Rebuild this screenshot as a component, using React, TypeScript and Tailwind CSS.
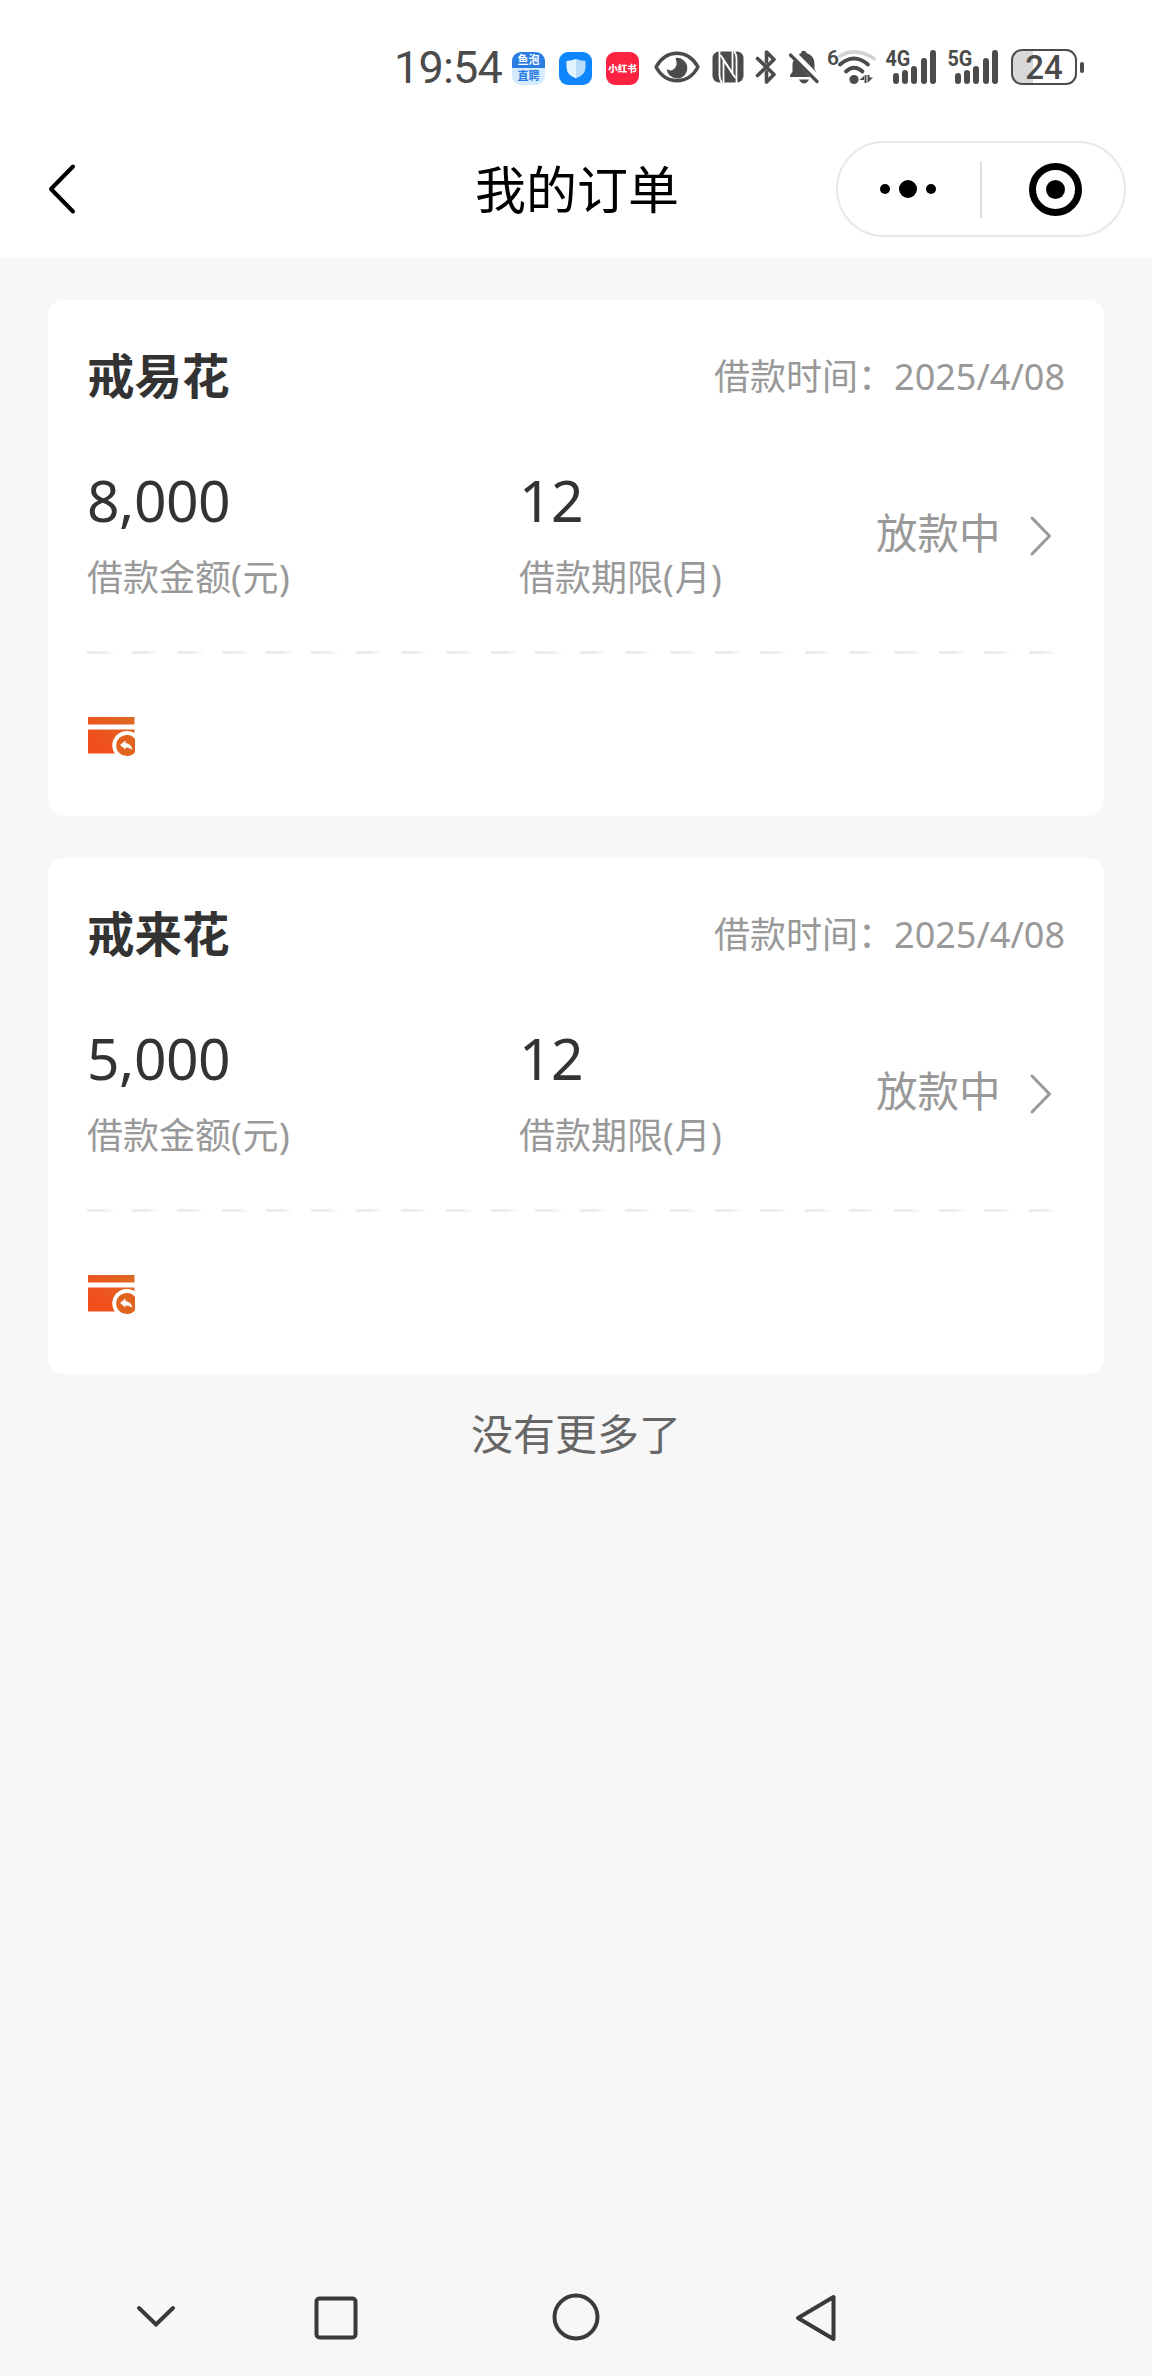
import React from "react";

interface Order {
    id: number;
    product: string;
    amount: string;
    term: number;
    date: string;
    status: string;
}

const orders: Order[] = [
    { id: 1, product: "戒易花", amount: "8,000", term: 12, date: "2025/4/08", status: "放款中" },
    { id: 2, product: "戒来花", amount: "5,000", term: 12, date: "2025/4/08", status: "放款中" },
];

function EyeIcon() {
    return (
        <svg viewBox="0 0 46 32" className="w-[46px] h-8" fill="none">
            <path d="M2 16C7 7 14 2.2 23 2.2S39 7 44 16C39 25 32 29.8 23 29.8S7 25 2 16Z" stroke="#4b4b4b" strokeWidth="3.4" strokeLinejoin="round" />
            <path d="M21.5 7A10.3 10.3 0 1 1 12.800 18Q16 20.500 19.500 18.500Q24.500 15 21.500 7Z" fill="#4b4b4b" />
        </svg>
    );
}

function NfcIcon() {
    return (
        <svg viewBox="0 0 32 32" className="w-8 h-8">
            <rect x="0.500" y="0.500" width="31" height="31" rx="6.500" fill="#4b4b4b" />
            <path d="M7.500 0V24Q7.500 29 10 32" fill="none" stroke="#fff" strokeWidth="1.800" />
            <path d="M24.500 32V8Q24.500 3 22 0" fill="none" stroke="#fff" strokeWidth="1.800" />
            <path d="M11.500 32V9L23.500 27" fill="none" stroke="#fff" strokeWidth="1.800" />
            <path d="M8.500 4L20.500 22.500V0" fill="none" stroke="#fff" strokeWidth="1.800" />
        </svg>
    );
}

function BluetoothIcon() {
    return (
        <svg viewBox="0 0 22 34" className="w-[22px] h-[34px]" fill="none" stroke="#4b4b4b" strokeWidth="3.6" strokeLinejoin="round" strokeLinecap="round">
            <path d="M2.500 8.500L19 24.500L11.500 32V22M11.500 12V2L19 9.500L2.500 25.500" />
        </svg>
    );
}

function BellOffIcon() {
    return (
        <svg viewBox="0 0 32 34" className="w-8 h-[34px]">
            <path d="M15.500 0.800Q18 0.800 18.500 3Q26.500 5.500 26.500 14V19L28.500 22.500L10.800 4.500Q12 3.500 13 3Q13.300 0.800 15.500 0.800Z" fill="#4b4b4b" />
            <path d="M6 10L22 27H2Q1.500 25 4.500 22V14Q4.500 12 6 10Z" fill="#4b4b4b" />
            <path d="M11 29.500H21Q19 33.500 16 33.500T11 29.500Z" fill="#4b4b4b" />
            <path d="M2.500 5L29 31.500" stroke="#4b4b4b" strokeWidth="3.200" strokeLinecap="round" />
        </svg>
    );
}

function WifiIcon() {
    return (
        <svg viewBox="0 0 40 36" className="w-10 h-9" fill="none" strokeLinecap="round">
            <path d="M3 7Q19 -2.500 37 9.500" stroke="#d2d2d2" strokeWidth="3.600" />
            <path d="M3 15.500Q17 3.500 31 15.500" stroke="#4b4b4b" strokeWidth="3.800" />
            <path d="M9 22.500Q17 15 25.500 22.500" stroke="#4b4b4b" strokeWidth="3.800" />
            <circle cx="17" cy="30.500" r="4.600" fill="#4b4b4b" />
            <path d="M27.500 26V34H29.500V26ZM22.500 31L28 26V31ZM30.500 26V34L36 28.500H32.500V26Z" fill="#4b4b4b" />
        </svg>
    );
}

function Signal({ label }: { label: string }) {
    return (
        <div className="relative w-[50px] h-[34px]">
            <span className="absolute left-[-6px] top-0 font-['Roboto'] text-[22px] leading-[18px] font-bold origin-left scale-x-90">
                <span className="ml-[6px]">{label}</span>
            </span>
            <div className="absolute right-0 bottom-0 flex items-end gap-[3.300px]">
                <i className="w-[6px] h-[11px] rounded-full bg-[#4b4b4b]" />
                <i className="w-[6px] h-[14px] rounded-full bg-[#4b4b4b]" />
                <i className="w-[6px] h-[18px] rounded-full bg-[#4b4b4b]" />
                <i className="w-[6px] h-[26px] rounded-full bg-[#4b4b4b]" />
                <i className="w-[6px] h-[34px] rounded-full bg-[#4b4b4b]" />
            </div>
        </div>
    );
}

function StatusBar() {
    return (
        <div className="h-[124px] pt-[50px] pl-[394px] flex items-start text-[#4b4b4b]">
            <span className="mt-[1px] w-[118px] font-['Roboto'] text-[45px] leading-[34px] tracking-[-0.800px]">19:54</span>
            {/* App notifications */}
            <div className="mt-[2px] w-[33px] h-[33px] rounded-[9px] overflow-hidden text-[11px] leading-[16px] font-bold text-center">
                <div className="h-4 bg-[#2b7de4] text-white">鱼泡</div>
                <div className="h-[17px] bg-[#d5ecff] text-[#2b7de4]">直聘</div>
            </div>
            <div className="mt-[2px] ml-[14px] w-[33px] h-[33px] rounded-[9px] bg-[#0f86fb] flex items-center justify-center">
                <svg viewBox="0 0 20 20" className="w-5 h-5">
                    <path d="M0.500 2Q6 1.500 10 0V19.500Q0.500 16 0.500 8Z" fill="#e3f4ff" />
                    <path d="M19.500 2Q14 1.500 10 0V19.500Q19.500 16 19.500 8Z" fill="#b9dcfb" />
                </svg>
            </div>
            <div className="mt-[2px] ml-[14px] w-[33px] h-[33px] rounded-[9px] bg-[#fb2340] text-white text-[9.500px] leading-[33px] font-black text-center whitespace-nowrap">小红书</div>
            <div className="ml-[15px] mt-[1px]"><EyeIcon /></div>
            <div className="ml-[12px] mt-[1px]"><NfcIcon /></div>
            <div className="ml-[11px]"><BluetoothIcon /></div>
            <div className="ml-[11px]"><BellOffIcon /></div>
            <span className="w-[9px] ml-[8px] font-['Roboto'] text-[21px] leading-[16px] font-semibold -indent-[1px]">6</span>
            <div className="-mt-[1px]"><WifiIcon /></div>
            <div className="ml-[9px]"><Signal label="4G" /></div>
            <div className="ml-[12px]"><Signal label="5G" /></div>
            <div className="ml-[13px] -mt-[1px] w-[66px] h-9 rounded-[11px] border-[2.500px] border-[#4b4b4b] bg-linear-to-r from-[#d8d8d8] from-32% to-white to-32% text-center font-['Roboto'] text-[33px] leading-[33px] font-medium">24</div>
            <i className="ml-[3px] mt-[12px] w-1 h-[11px] rounded-full bg-[#4b4b4b]" />
        </div>
    );
}

function NavBar() {
    return (
        <div className="h-[134px] pl-[46px] pr-[26px] pb-1 flex items-center justify-between">
            <svg viewBox="0 0 32 52" className="w-8 h-[52px]" fill="none" stroke="#000" strokeWidth="4" strokeLinecap="round" strokeLinejoin="round">
                <path d="M27 3.500L5 26L27 48.500" />
            </svg>
            <h1 className="ml-[240px] text-[51px] leading-[56px] text-black">我的订单</h1>
            {/* Mini program capsule */}
            <div className="w-[290px] h-24 rounded-full border-2 border-[#e8e8e8] flex items-center">
                <div className="w-[142px] pr-px flex items-center justify-center gap-[9px]">
                    <i className="w-[10px] h-[10px] rounded-full bg-black" />
                    <i className="w-[18px] h-[18px] rounded-full bg-black" />
                    <i className="w-[10px] h-[10px] rounded-full bg-black" />
                </div>
                <i className="w-[2px] h-[57px] bg-[#dedede]" />
                <div className="ml-[47px] w-[53px] h-[53px] rounded-full border-[7px] border-black flex items-center justify-center">
                    <i className="w-[19px] h-[19px] rounded-full bg-black" />
                </div>
            </div>
        </div>
    );
}

function WalletIcon() {
    return (
        <svg viewBox="0 0 48 40" className="w-12 h-10">
            <defs>
                <linearGradient id="wallet" x1="0" y1="1" x2="1" y2="0">
                    <stop offset="0.300" stopColor="#f0501c" />
                    <stop offset="1" stopColor="#dc6a24" />
                </linearGradient>
            </defs>
            <path d="M0 0H46.500V7.500H0ZM0 12.500H46.500V36.500H0Z" fill="url(#wallet)" />
            <circle cx="38.800" cy="28.500" r="14.500" fill="#fff" />
            <path d="M47 21.800V35.200A10.600 10.600 0 1 1 47 21.800Z" fill="#e0641f" />
            <path d="M32 28L37.500 23.500V26Q43.500 27 44.500 33Q41.500 30 37.500 30.500V32.500Z" fill="#fff" />
        </svg>
    );
}

function OrderCard({ order }: { order: Order }) {
    return (
        <div className="h-[516px] pl-[39px] pr-[39px] bg-white rounded-[16px]">
            {/* Header */}
            <div className="h-[152px] flex items-center justify-between">
                <h3 className="text-[47.500px] leading-[48px] font-bold text-[#333]">{order.product}</h3>
                <span className="mt-[2px] text-[36px] leading-9 text-[#999]">借款时间：{order.date}</span>
            </div>

            {/* Amount, term and status */}
            <div className="pt-4 flex items-center">
                <div className="w-[432px]">
                    <div className="pt-px text-[57px] leading-[63px] tracking-[-0.500px] text-[#333]">{order.amount}</div>
                    <div className="mt-7 text-[36px] leading-9 text-[#999]">借款金额<span className="tracking-[0.600px]">(元)</span></div>
                </div>
                <div className="w-[357px]">
                    <div className="pt-px text-[57px] leading-[63px] tracking-[-0.500px] text-[#333]">{order.term}</div>
                    <div className="mt-7 text-[36px] leading-9 text-[#999]">借款期限<span className="tracking-[0.600px]">(月)</span></div>
                </div>
                <span className="mt-px text-[41.500px] leading-[42px] text-[#999]">{order.status}</span>
                <svg viewBox="0 0 24 42" className="ml-[28px] mt-2 w-6 h-[42px]" fill="none" stroke="#999" strokeWidth="3" strokeLinecap="round" strokeLinejoin="round">
                    <path d="M3 3L20.500 21L3 39" />
                </svg>
            </div>

            {/* Dashed divider */}
            <div className="mt-[55px] h-[3px] flex gap-[16.850px]">
                {Array.from({ length: 22 }, (_, i) => (
                    <i key={i} className="w-7 h-[3px] shrink-0 bg-linear-to-r from-[#ececec] from-50% to-white" />
                ))}
            </div>

            <div className="mt-[63px] ml-px"><WalletIcon /></div>
        </div>
    );
}

function SystemNav() {
    return (
        <div className="h-[118px] pl-[136px] pb-px flex items-center">
            <svg viewBox="0 0 40 24" className="w-10 h-6" fill="none" stroke="#3a3a3a" strokeWidth="4" strokeLinecap="round">
                <path d="M3 3L20 19.500L37 3" />
            </svg>
            <svg viewBox="0 0 44 44" className="ml-[138px] mt-[2px] w-11 h-11" fill="none" stroke="#3a3a3a" strokeWidth="4">
                <rect x="2.500" y="2.500" width="39" height="39" rx="3" />
            </svg>
            <svg viewBox="0 0 48 48" className="ml-[194px] w-12 h-12" fill="none" stroke="#3a3a3a" strokeWidth="4">
                <circle cx="24" cy="24" r="21.500" />
            </svg>
            <svg viewBox="0 0 44 48" className="ml-[194px] mt-[2px] w-11 h-12" fill="none" stroke="#3a3a3a" strokeWidth="4" strokeLinejoin="round">
                <path d="M4 24L39.500 3V45Z" />
            </svg>
        </div>
    );
}

export default function App() {
    return (
        <div className="w-[1152px] h-[2376px] flex flex-col bg-[#f7f7f7] font-['Noto_Sans','Noto_Sans_CJK_SC',sans-serif]">
            <header className="h-[258px] bg-white">
                <StatusBar />
                <NavBar />
            </header>
            <main className="flex-1 px-12 pt-[42px]">
                <div className="flex flex-col gap-[42px]">
                    {orders.map((order) => (
                        <OrderCard key={order.id} order={order} />
                    ))}
                </div>
                <p className="mt-[39px] text-center text-[42px] leading-[42px] text-[#666]">没有更多了</p>
            </main>
            <SystemNav />
        </div>
    );
}
